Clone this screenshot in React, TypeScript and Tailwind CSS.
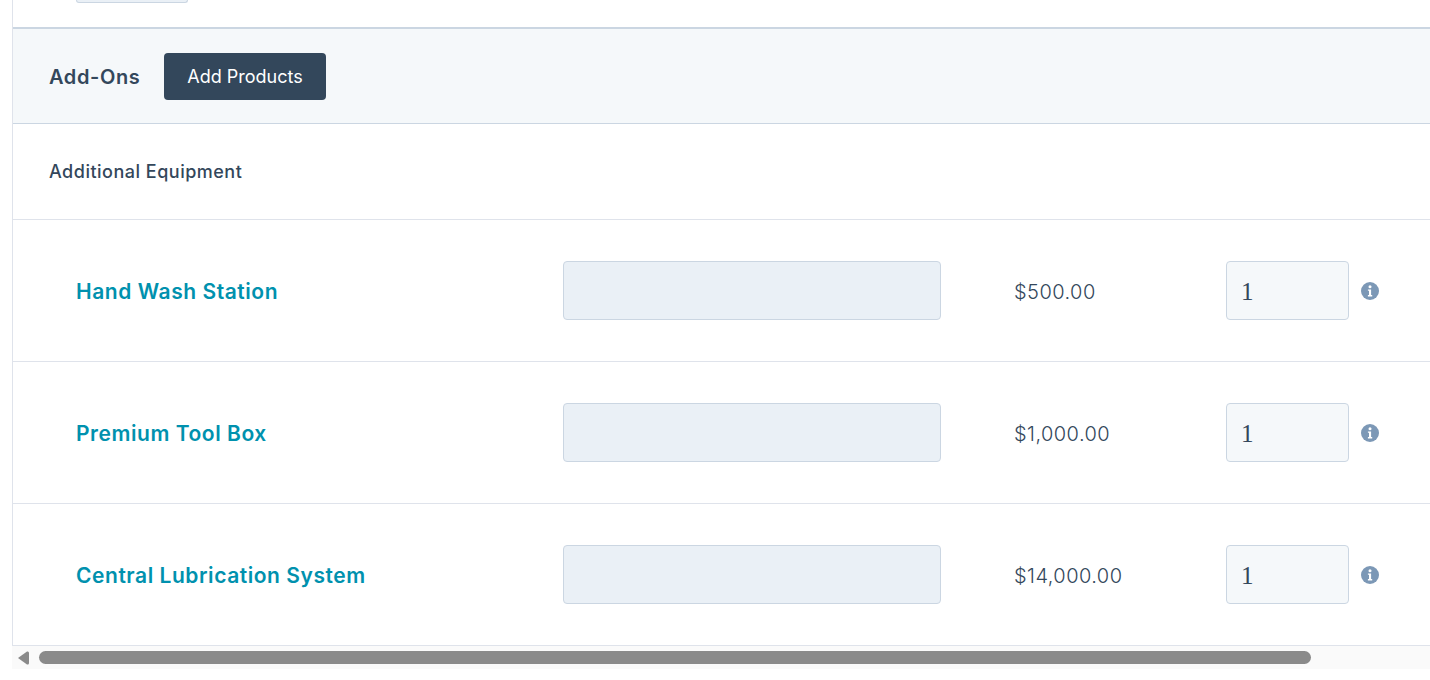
const rows = [
  { name: "Hand Wash Station", price: "$500.00" },
  { name: "Premium Tool Box", price: "$1,000.00" },
  { name: "Central Lubrication System", price: "$14,000.00" },
];

function InfoIcon() {
  return (
    <svg viewBox="0 0 18 18" className="ml-3 h-[18px] w-[18px] shrink-0">
      <circle cx="9" cy="9" r="9" fill="#7c98b6" />
      <circle cx="9" cy="4.8" r="1.5" fill="#fff" />
      <path d="M6.9 7.4h3.2v5.6h1.1v1.4H6.9V13H8V8.8H6.9z" fill="#fff" />
    </svg>
  );
}

export default function App() {
  return (
    <div className="h-[680px] w-[1430px] overflow-hidden bg-white font-['Inter',sans-serif] text-[#33475b]">
      <div className="ml-3 h-[646px] border-l border-l-[#dfe3eb]">
        {/* Bottom of the section above */}
        <div className="h-[27px] pl-[63px]">
          <div className="h-[3px] w-28 rounded-b border border-t-0 border-[#cbd6e2] bg-[#eaf0f6]" />
        </div>

        {/* Add-Ons header */}
        <div className="flex h-[97px] items-center border-t-2 border-b border-t-[#cbd6e2] border-b-[#cbd6e2] bg-[#f5f8fa] pl-9">
          <span className="w-[115px] pt-[2px] text-[20px] font-semibold tracking-[0.6px]">Add-Ons</span>
          <button className="h-[47px] w-[162px] rounded-[4px] bg-[#33475b] text-[18px] text-white">Add Products</button>
        </div>

        <div className="flex h-24 items-center border-b border-[#dfe3eb] pl-9 text-[18px] font-medium tracking-[0.5px]">Additional Equipment</div>

        {rows.map((row) => (
          <div key={row.name} className="flex h-[142px] items-center border-b border-[#dfe3eb] pl-[63px]">
            <a className="w-[487px] pt-[2px] text-[21px] font-semibold tracking-[0.55px] text-[#0091ae]">{row.name}</a>
            <div className="h-[59px] w-[378px] rounded-[4px] border border-[#cbd6e2] bg-[#eaf0f6]" />
            <span className="ml-[73px] w-[212px] pt-[2px] text-[20px] font-[350] tracking-[0.45px]">{row.price}</span>
            <div className="flex h-[59px] w-[123px] items-center rounded-[4px] border border-[#cbd6e2] bg-[#f5f8fa] pl-[14px] pt-[2px] font-['Liberation_Serif',serif] text-[25px]">1</div>
            <InfoIcon />
          </div>
        ))}
      </div>

      {/* Horizontal scrollbar */}
      <div className="ml-3 flex h-[23px] items-center bg-[#fafafa] pl-[5px]">
        <svg viewBox="0 0 12 16" className="h-4 w-3 shrink-0">
          <path d="M1 8 L10 1.5 Q12 1 12 3 V13 Q12 15 10 14.5 Z" fill="#8a8a8a" />
        </svg>
        <div className="ml-[10px] h-[13px] w-[1272px] rounded-full bg-[#8a8a8a]" />
      </div>
    </div>
  );
}
